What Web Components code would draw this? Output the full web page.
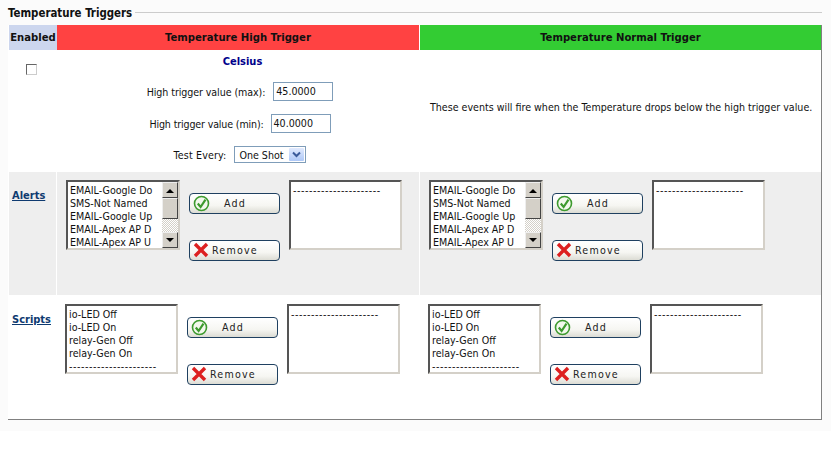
<!DOCTYPE html>
<html><head><meta charset="utf-8"><style>
html,body{margin:0;padding:0;background:#fff}
body{width:831px;height:450px;overflow:hidden;font:10.6px "DejaVu Sans Condensed","DejaVu Sans",sans-serif;font-stretch:condensed;color:#111}
</style></head><body>
<trigger-panel title-text="Temperature Triggers">
  <trigger-row kind="head">
    <head-cell style="--bg:#ccd6ee;--w:48px;--mr:0px">Enabled</head-cell>
    <head-cell style="--bg:#ff4242;--w:362px;--mr:1px">Temperature High Trigger</head-cell>
    <head-cell style="--bg:#33cc33;--w:401px;--mr:0px">Temperature Normal Trigger</head-cell>
  </trigger-row>
  <trigger-row kind="settings">
    <settings-cell style="--w:48px"><fake-check></fake-check></settings-cell>
    <settings-cell style="--w:363px"><high-form></high-form></settings-cell>
    <settings-cell style="--w:401px"><note-text>These events will fire when the Temperature drops below the high trigger value.</note-text></settings-cell>
  </trigger-row>
  <trigger-row kind="alerts">
    <row-label>Alerts</row-label>
    <picker-set items="EMAIL-Google Do|SMS-Not Named|EMAIL-Google Up|EMAIL-Apex AP D|EMAIL-Apex AP U" scroll style="--w:362px;--mr:1px"></picker-set>
    <picker-set items="EMAIL-Google Do|SMS-Not Named|EMAIL-Google Up|EMAIL-Apex AP D|EMAIL-Apex AP U" scroll style="--w:401px;--pl:9px"></picker-set>
  </trigger-row>
  <trigger-row kind="scripts">
    <row-label>Scripts</row-label>
    <picker-set items="io-LED Off|io-LED On|relay-Gen Off|relay-Gen On|----------------------" style="--w:362px;--mr:1px;--pl:8px;--lw:113px"></picker-set>
    <picker-set items="io-LED Off|io-LED On|relay-Gen Off|relay-Gen On|----------------------" style="--w:401px;--pl:8px;--lw:113px"></picker-set>
  </trigger-row>
</trigger-panel>
<script>
const def=(n,html)=>customElements.define(n,class extends HTMLElement{connectedCallback(){if(this.shadowRoot)return;const s=this.attachShadow({mode:'open'});s.innerHTML=typeof html==='function'?html(this):html;}});
const dash=t=>/^-+$/.test(t)?`<span style="letter-spacing:.55px">${t}</span>`:t;
def('trigger-panel',el=>`<style>
:host{display:block;width:831px;height:431px;background:#fbfbfb;box-sizing:border-box;padding:6px 9px 0 8px}
.leg{display:flex;align-items:center;height:13px;font-weight:bold;font-size:11.4px;color:#111;gap:3px}
.leg i{flex:1;height:1px;background:#ccc}
.box{margin-top:6px;width:814px;height:395px;box-sizing:border-box;border-right:1px solid #808080;border-bottom:1px solid #808080;background:#fff;padding-left:1px}
</style><div class="leg"><span>${el.getAttribute('title-text')}</span><i></i></div><div class="box"><slot></slot></div>`);
def('trigger-row',el=>{const k=el.getAttribute('kind');const h={head:25,settings:121,alerts:123,scripts:123}[k];const bg=k==='alerts'?'#eee':'transparent';
return `<style>:host{display:flex;height:${h}px;margin-bottom:${k==='settings'||k==='alerts'?1:0}px;background:#fff}
::slotted(*){--rowbg:${bg}}</style><slot></slot>`});
def('head-cell',`<style>:host{display:flex;align-items:center;justify-content:center;flex:none;width:var(--w);margin-right:var(--mr);background:var(--bg);font-weight:bold;font-size:11.2px;color:#111}</style><slot></slot>`);
def('settings-cell',`<style>:host{display:block;flex:none;width:var(--w)}</style><slot></slot>`);
def('fake-check',`<style>:host{display:block;width:11px;height:11px;margin:14px 0 0 17px;box-sizing:border-box;border:1px solid;border-color:#666 #ccc #ccc #666;background:#fff}</style>`);
def('note-text',`<style>:host{display:block;margin-top:51px;padding-left:10px;white-space:nowrap}</style><slot></slot>`);
def('row-label',`<style>:host{display:block;flex:none;width:47px;margin-right:1px;background:var(--rowbg);box-sizing:border-box;padding:17px 0 0 3px;font-weight:bold;color:#0e3a70;text-decoration:underline;font-size:11px}</style><slot></slot>`);
def('high-form',`<style>:host{display:block;padding-top:5px;text-align:center}
.c{color:#00008b;font-weight:bold;font-size:11px;padding-left:8px;height:14px;line-height:14px}
.r{display:flex;align-items:center;justify-content:center;gap:8px;padding-left:3px}
.i{box-sizing:border-box;width:60px;height:19px;border:1px solid #7f9db9;background:#fff;text-align:left;padding-left:2px;line-height:17px}
.s{box-sizing:border-box;width:72px;height:17px;border:1px solid #7f9db9;display:flex;align-items:center;justify-content:space-between;padding:0 1px 0 4px;background:#fff}
.a{width:15px;height:13px;background:linear-gradient(#e1eafe,#aec8f7);border-radius:1px;display:flex;align-items:center;justify-content:center}
</style><div class="c">Celsius</div>
<div class="r" style="margin-top:13px"><span style="letter-spacing:-.08px">High trigger value (max):</span><div class="i">45.0000</div></div>
<div class="r" style="margin-top:13px;gap:7px"><span style="letter-spacing:-.15px">High trigger value (min):</span><div class="i">40.0000</div></div>
<div class="r" style="margin-top:13px"><span style="letter-spacing:.15px">Test Every:</span><div class="s"><span>One Shot</span><div class="a"><svg width="9" height="7" viewBox="0 0 9 7"><path d="M1 1.5 4.5 5 8 1.5" fill="none" stroke="#3a5a9a" stroke-width="2"/></svg></div></div></div>`);
def('picker-set',el=>{const items=el.getAttribute('items').split('|').map(t=>`<div>${dash(t)}</div>`).join('');const sc=el.hasAttribute('scroll');
return `<style>:host{display:flex;flex:none;width:var(--w);margin-right:var(--mr,0);background:var(--rowbg);box-sizing:border-box;padding:8px 0 0 var(--pl,9px);align-items:flex-start}
.l{box-sizing:border-box;width:var(--lw,114px);height:70px;border:2px solid;border-color:#555 #d4d0c8 #d4d0c8 #555;background:#fff;display:flex;overflow:hidden;margin-right:9px;flex:none}
.t{flex:1;padding:2px 0 0 2px;line-height:13px;white-space:nowrap;overflow:hidden}
.sb{width:16px;flex:none;display:flex;flex-direction:column;background:repeating-conic-gradient(#d4d0c8 0 25%,#fff 0 50%) 0 0/2px 2px}
.b{height:16px;box-sizing:border-box;background:#d4d0c8;border:1px solid;border-color:#eee #444 #444 #eee;display:flex;align-items:center;justify-content:center}
.th{height:21px;box-sizing:border-box;background:#d4d0c8;border:1px solid;border-color:#eee #444 #444 #eee}
.g{flex:1}
.bs{display:flex;flex-direction:column;gap:26px;margin-top:13px;margin-right:9px;flex:none}
.btn{box-sizing:border-box;width:91px;height:21px;padding-bottom:1px;border:1px solid #1f4060;border-radius:4px;background:linear-gradient(#fff 0,#f6f6f2 60%,#dcdcd4 100%);display:flex;align-items:center;letter-spacing:1.2px;color:#222}
.btn svg{flex:none;margin-left:3px}
</style>
<div class="l"><div class="t">${items}</div>${sc?`<div class="sb"><div class="b"><svg width="8" height="5"><path d="M0 5 4 1 8 5Z" fill="#000"/></svg></div><div class="th"></div><div class="g"></div><div class="b"><svg width="8" height="5"><path d="M0 0 4 4 8 0Z" fill="#000"/></svg></div></div>`:''}</div>
<div class="bs"><div class="btn"><svg width="17" height="17" viewBox="0 0 17 17"><circle cx="8.5" cy="8.5" r="7" fill="#f2f8ec" stroke="#3d9a2e" stroke-width="1.6"/><path d="M4.8 8.5 7.6 12 12.5 4.6" fill="none" stroke="#3d9a2e" stroke-width="2.2"/></svg><span style="margin-left:14px">Add</span></div>
<div class="btn"><svg width="16" height="16" viewBox="0 0 16 16"><path d="M2 2 14 14M14 2 2 14" stroke="#dd2020" stroke-width="3.4"/></svg><span style="margin-left:3px">Remove</span></div></div>
<div class="l" style="margin-right:0;width:113px"><div class="t">${dash('----------------------')}</div></div>`});
</script></body></html>
